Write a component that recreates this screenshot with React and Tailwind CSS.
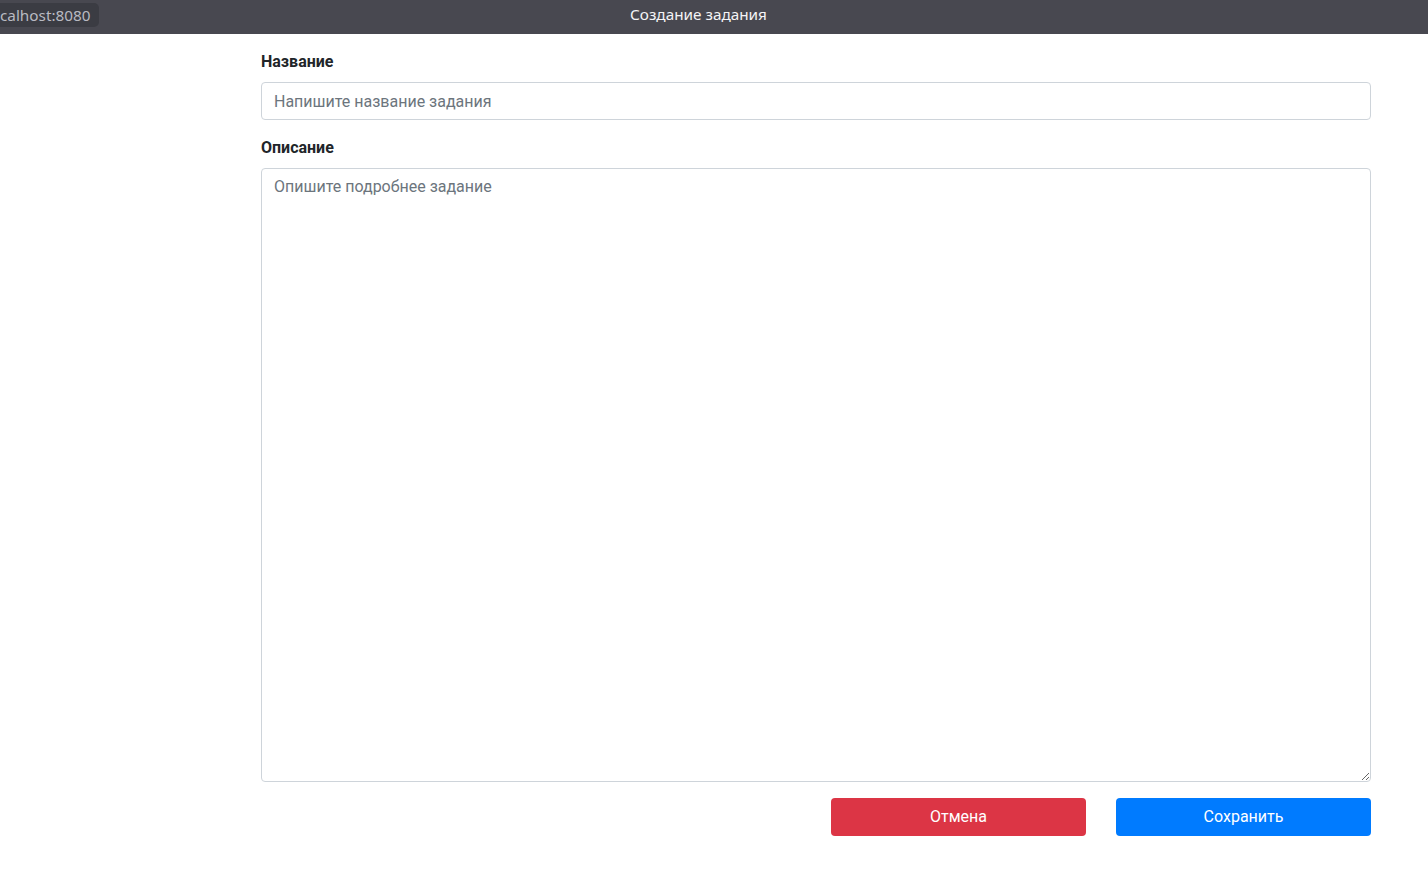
export default function App() {
  return (
    <div className="min-h-[869px] bg-white" style={{ fontFamily: 'Roboto, "Noto Sans", sans-serif' }}>
      <div className="relative h-[34px] bg-[#484850] flex items-start justify-center pr-[31px]">
        <div className="absolute left-0 top-[3px] h-[24px] w-[99px] bg-[#3b3c43] rounded-r-[5px] flex items-center text-[15.3px] leading-[24px] text-[#b9bac2]" style={{ fontFamily: '"Noto Sans", sans-serif' }}>
          calhost:8080
        </div>
        <span className="mt-[3px] text-[15.3px] leading-[22px] text-[#f4f4f6]" style={{ fontFamily: '"Noto Sans", sans-serif' }}>Создание задания</span>
      </div>
      <div className="ml-[261px] w-[1110px] pt-[16px]">
        <div className="mb-[16px]">
          <label className="block mb-[8px] text-[16px] leading-[24px] font-bold text-[#212529]">Название</label>
          <input
            readOnly
            placeholder="Напишите название задания"
            className="block w-full h-[38px] px-[12px] border border-[#ced4da] rounded-[4px] text-[16px] text-[#495057] placeholder:text-[#6c757d] outline-none"
          />
        </div>
        <div className="mb-[16px]">
          <label className="block mb-[8px] text-[16px] leading-[24px] font-bold text-[#212529]">Описание</label>
          <textarea
            readOnly
            placeholder="Опишите подробнее задание"
            className="block w-full h-[614px] px-[12px] py-[6px] border border-[#ced4da] rounded-[4px] text-[16px] leading-[24px] text-[#495057] placeholder:text-[#6c757d] outline-none"
          />
        </div>
        <div className="flex justify-end gap-[30px]">
          <button className="w-[255px] h-[38px] rounded-[4px] bg-[#dc3545] text-white text-[16px]">Отмена</button>
          <button className="w-[255px] h-[38px] rounded-[4px] bg-[#007bff] text-white text-[16px]">Сохранить</button>
        </div>
      </div>
    </div>
  );
}
